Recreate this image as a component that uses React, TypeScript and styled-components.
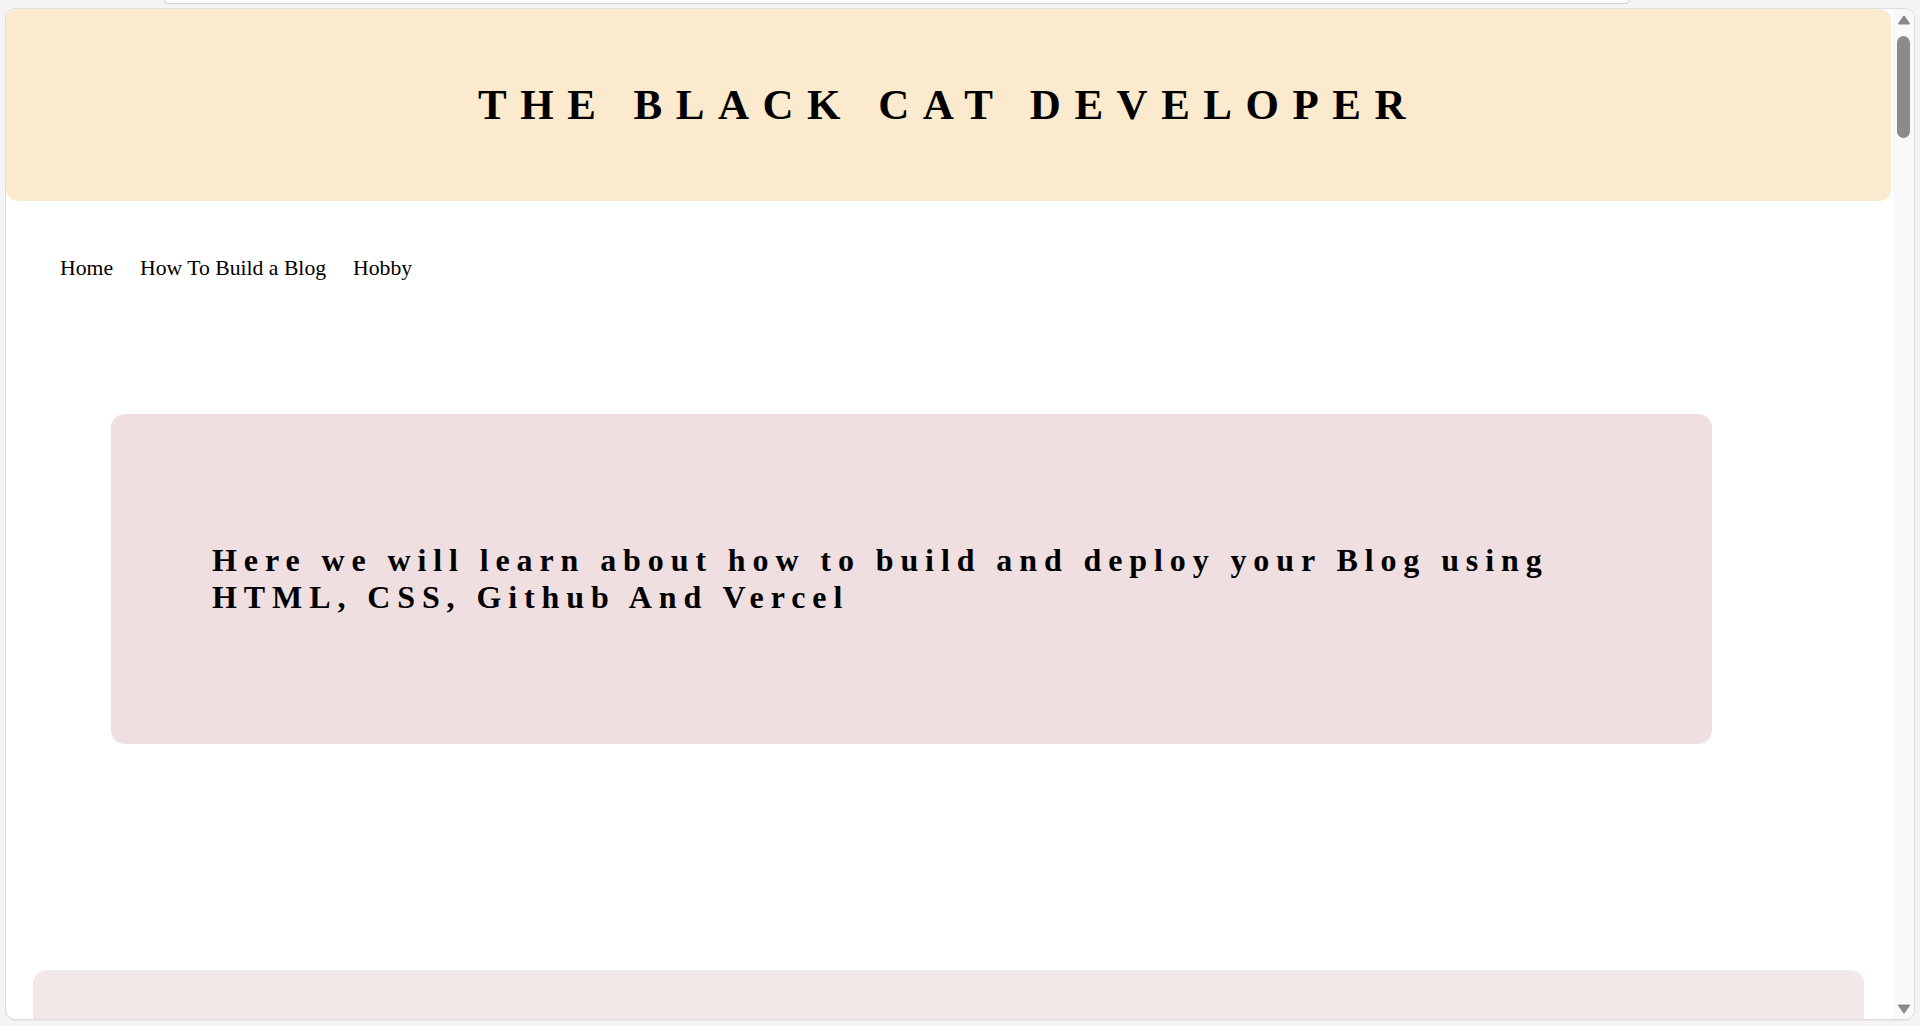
import React from "react";
import styled, { createGlobalStyle } from "styled-components";

const GlobalStyle = createGlobalStyle`
  html, body {
    margin: 0;
    padding: 0;
    background: #f4f4f4;
    font-family: "Liberation Serif", "Times New Roman", serif;
    color: #000;
  }
  * { box-sizing: border-box; }
`;

const Page = styled.div`
  height: 1026px;
  display: flex;
  flex-direction: column;
  background: #f4f4f4;
  overflow: hidden;
`;

const TopStrip = styled.div`
  height: 8px;
  flex: none;
  padding-left: 164px;
`;

const UrlBarEdge = styled.div`
  width: 1465px;
  height: 4px;
  background: #ffffff;
  border: 1px solid #d2d2d2;
  border-top: none;
  border-radius: 0 0 8px 8px;
`;

const Window = styled.div`
  height: 1012px;
  flex: none;
  margin: 0 5px;
  border: 1px solid #dddddd;
  border-radius: 10px;
  background: #ffffff;
  overflow: hidden;
  display: flex;
  box-shadow: 0 1px 1px rgba(0, 0, 0, 0.06);
`;

const Content = styled.main`
  flex: 1;
  min-width: 0;
  overflow: hidden;
  display: flex;
  flex-direction: column;
`;

const Header = styled.header`
  height: 192px;
  flex: none;
  margin-right: 2px;
  background: #fbeacd;
  border-radius: 10px 12px 12px 12px;
  display: flex;
  align-items: center;
  justify-content: center;
`;

const Title = styled.h1`
  margin: 0;
  font-family: "Liberation Serif", "Times New Roman", serif;
  font-weight: 700;
  font-size: 43px;
  letter-spacing: 13.5px;
  line-height: 1.15;
`;

const Nav = styled.nav`
  display: flex;
  gap: 27px;
  margin-top: 55px;
  padding-left: 54px;
`;

const NavLink = styled.a`
  font-family: "Liberation Serif", "Times New Roman", serif;
  font-size: 21.7px;
  color: #000;
  text-decoration: none;
  line-height: normal;
`;

const HeroCard = styled.section`
  flex: none;
  margin: 133px 0 0 105px;
  width: 1601px;
  height: 330px;
  background: #f0dfe0;
  border-radius: 14px;
  padding: 0 101px;
  display: flex;
  align-items: center;
`;

const HeroText = styled.h2`
  margin: 0;
  font-family: "Liberation Serif", "Times New Roman", serif;
  font-weight: 700;
  font-size: 32px;
  letter-spacing: 6.9px;
  line-height: normal;
`;

const NextCard = styled.section`
  flex: none;
  margin: 226px 0 0 27px;
  width: 1831px;
  height: 200px;
  background: #f3e8e8;
  border-radius: 14px;
`;

const Scrollbar = styled.div`
  width: 21px;
  flex: none;
  background: #f9f9f9;
  display: flex;
  flex-direction: column;
  align-items: center;
  padding: 6px 0 5px;
`;

const Thumb = styled.div`
  width: 13px;
  height: 102px;
  margin-top: 11px;
  background: #8b8b8b;
  border-radius: 7px;
`;

const Spacer = styled.div`
  flex: 1;
`;

const Arrow: React.FC<{ down?: boolean }> = ({ down }) => (
  <svg width="14" height="10" viewBox="0 0 14 10" style={{ display: "block" }}>
    {down ? (
      <path d="M1 1.5 Q0.5 0.5 1.8 0.5 H12.2 Q13.5 0.5 13 1.5 L7.8 9 Q7 10 6.2 9 Z" fill="#8a8a8a" />
    ) : (
      <path d="M1 8.5 Q0.5 9.5 1.8 9.5 H12.2 Q13.5 9.5 13 8.5 L7.8 1 Q7 0 6.2 1 Z" fill="#8a8a8a" />
    )}
  </svg>
);

export default function App() {
  return (
    <>
      <GlobalStyle />
      <Page>
        <TopStrip>
          <UrlBarEdge />
        </TopStrip>
        <Window>
          <Content>
            <Header>
              <Title>THE BLACK CAT DEVELOPER</Title>
            </Header>
            <Nav>
              <NavLink href="#">Home</NavLink>
              <NavLink href="#">How To Build a Blog</NavLink>
              <NavLink href="#">Hobby</NavLink>
            </Nav>
            <HeroCard>
              <HeroText>
                Here we will learn about how to build and deploy your Blog using HTML, CSS, Github And Vercel
              </HeroText>
            </HeroCard>
            <NextCard />
          </Content>
          <Scrollbar>
            <Arrow />
            <Thumb />
            <Spacer />
            <Arrow down />
          </Scrollbar>
        </Window>
      </Page>
    </>
  );
}
